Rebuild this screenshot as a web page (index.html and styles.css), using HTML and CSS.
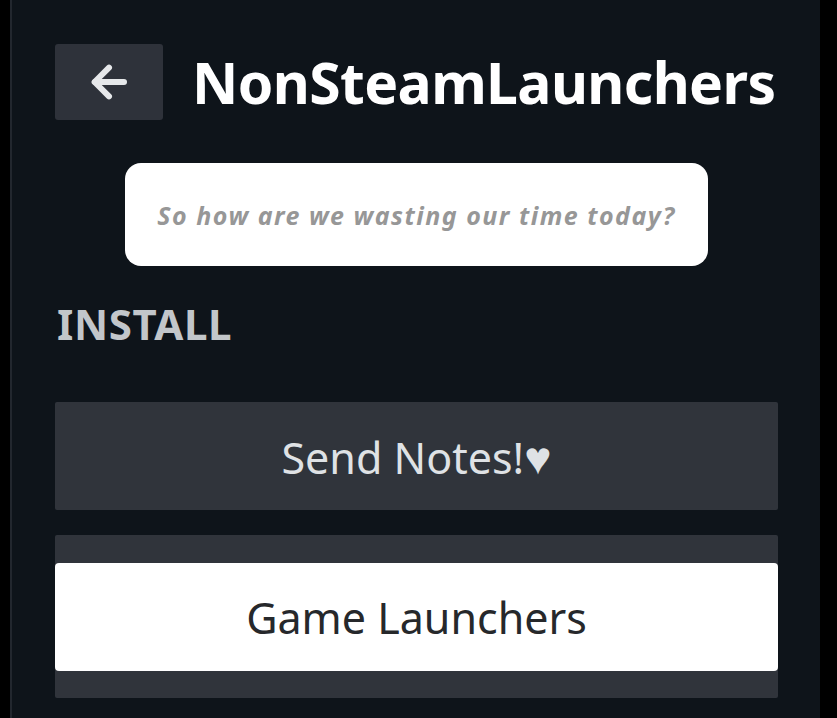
FILE: index.html
```html
<!DOCTYPE html>
<html>

<head>
	<meta charset="UTF-8">
	<title>NonSteamLaunchers</title>
	<link rel="stylesheet" href="styles.css">
</head>

<body>
	<div class="screen">
		<div class="panel">
			<div class="header">
				<button class="back">
					<svg width="48" height="48" viewBox="0 0 24 24" fill="none" stroke="#e6e8ea" stroke-width="3" stroke-linecap="round" stroke-linejoin="round">
						<path d="M19.5 12H5"></path>
						<path d="M12 4.8L4.8 12l7.2 7.2"></path>
					</svg>
				</button>
				<h1>NonSteamLaunchers</h1>
			</div>
			<div class="quote">
				<span>So how are we wasting our time today?</span>
			</div>
			<h2>INSTALL</h2>
			<div class="row">
				<button class="btn">Send Notes!<span class="heart">&#9829;</span></button>
			</div>
			<div class="row focus">
				<button class="btn active">Game Launchers</button>
			</div>
		</div>
		<div class="edge"></div>
	</div>
</body>

</html>
```

FILE: styles.css
```css
html,
body {
	margin: 0;
	height: 100%;
	background-color: #000;
	overflow: hidden;
}

body {
	font-family: "Noto Sans", "Open Sans", sans-serif;
}

.screen {
	display: flex;
	height: 718px;
}

.panel {
	width: 810px;
	background-color: #0e141a;
	border-left: 2px solid #22272e;
	margin-left: 10px;
	padding: 44px 0 0 43px;
	box-sizing: border-box;
}

.edge {
	flex: 1;
	background-color: #000;
}

.header {
	display: flex;
	align-items: center;
	gap: 29px;
}

.back {
	width: 108px;
	height: 76px;
	border: none;
	border-radius: 3px;
	background-color: #2e323a;
	display: flex;
	align-items: center;
	justify-content: center;
	padding: 0;
}

h1 {
	margin: 0;
	color: #fff;
	font-size: 57px;
	font-weight: 700;
	letter-spacing: -0.6px;
	line-height: 76px;
}

.quote {
	margin: 43px 0 0 70px;
	width: 583px;
	height: 103px;
	background-color: #fff;
	border-radius: 16px;
	display: flex;
	align-items: center;
	justify-content: center;
}

.quote span {
	color: #979797;
	font-size: 25px;
	font-weight: 700;
	font-style: italic;
	letter-spacing: 1.5px;
}

h2 {
	margin: 34px 0 0 2px;
	color: #c2c6ca;
	font-size: 42px;
	font-weight: 700;
	line-height: 48px;
	letter-spacing: 0.6px;
}

.row {
	width: 723px;
	margin-top: 54px;
}

.btn {
	width: 100%;
	height: 108px;
	border: none;
	border-radius: 2px;
	background-color: #30343b;
	color: #dfe2e5;
	font-family: "Noto Sans", "Open Sans", sans-serif;
	font-size: 43px;
	padding: 0;
}

.heart {
	font-size: 46px;
}

.focus {
	margin-top: 25px;
	background-color: #30343b;
	padding: 28px 0 27px;
	border-radius: 2px;
}

.btn.active {
	background-color: #fff;
	color: #26282b;
	border-radius: 4px;
}
```
